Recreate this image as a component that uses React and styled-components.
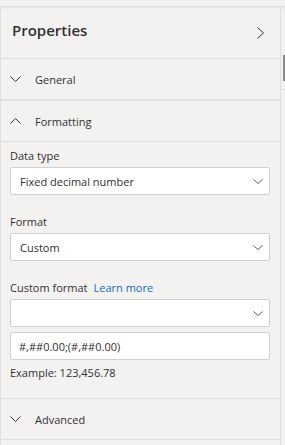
import React from "react";
import styled, { createGlobalStyle } from "styled-components";

const Global = createGlobalStyle`
  html, body { margin: 0; padding: 0; background: #f3f2f1; }
  body { font-family: "Open Sans", "Noto Sans", sans-serif; color: #323130; }
  * { box-sizing: border-box; }
`;

const Page = styled.div`
  width: 285px;
  height: 445px;
  overflow: hidden;
  display: flex;
  flex-direction: column;
  background: #f3f2f1;
`;

const TopBand = styled.div`
  height: 7px;
  flex: none;
  border-bottom: 1px solid #e1dfdd;
  box-shadow: 0 1px 2px rgba(0,0,0,0.05);
`;

const Body = styled.div`
  display: flex;
  flex: 1;
`;

const Panel = styled.div`
  width: 281px;
  border-left: 1px solid #e1dfdd;
  border-right: 1px solid #e1dfdd;
  display: flex;
  flex-direction: column;
`;

const Rail = styled.div`
  flex: 1;
  position: relative;
`;

const RailLine = styled.div`
  margin-top: 82px;
  height: 1px;
  background: #e1dfdd;
`;

const Thumb = styled.div`
  position: absolute;
  right: 0;
  top: 48px;
  width: 2px;
  height: 26px;
  background: #8a8886;
`;

const Header = styled.div`
  height: 52px;
  flex: none;
  display: flex;
  align-items: center;
  justify-content: space-between;
  padding: 0 16px 0 11px;
  border-bottom: 1px solid #e1dfdd;
`;

const Title = styled.div`
  font-size: 15px;
  font-weight: 600;
  color: #323130;
  margin-top: -5px;
`;

const SectionHead = styled.div`
  height: ${(p) => p.h}px;
  flex: none;
  display: flex;
  align-items: center;
  gap: 14px;
  padding-left: 9px;
  font-size: 11px;
  border-bottom: ${(p) => p.bw || 1}px solid #e1dfdd;
`;

const Content = styled.div`
  padding: 6px 10px 0 9px;
  height: 257px;
  flex: none;
  display: flex;
  flex-direction: column;
  border-bottom: 1px solid #e1dfdd;
`;

const Label = styled.div`
  font-size: 11px;
  line-height: 16px;
  margin-bottom: 3px;
  display: flex;
  gap: 6px;
`;

const Link = styled.span`
  color: #106ebe;
`;

const Field = styled.div`
  height: 28px;
  flex: none;
  background: #fff;
  border: 1px solid #d2d0ce;
  border-radius: 2px;
  display: flex;
  align-items: center;
  justify-content: space-between;
  padding: 0 6px 0 ${(p) => p.pl || 9}px;
  font-size: 11px;
  margin-bottom: ${(p) => p.mb || 0}px;
`;

const Example = styled.div`
  font-size: 11px;
  line-height: 16px;
  margin-top: 5px;
`;

const Chevron = ({ dir = "down", w = 11, h = 6, color = "#323130" }) => {
  const pts = {
    down: `0.5,0.5 ${w / 2},${h - 0.5} ${w - 0.5},0.5`,
    up: `0.5,${h - 0.5} ${w / 2},0.5 ${w - 0.5},${h - 0.5}`,
    right: `0.5,0.5 ${w - 0.5},${h / 2} 0.5,${h - 0.5}`,
  }[dir];
  return (
    <svg width={w} height={h} viewBox={`0 0 ${w} ${h}`} fill="none">
      <polyline points={pts} stroke={color} strokeWidth="1" strokeLinejoin="miter" />
    </svg>
  );
};

const Select = ({ value, mb }) => (
  <Field mb={mb}>
    <span>{value}</span>
    <Chevron dir="down" w={10} h={5} color="#605e5c" />
  </Field>
);

export default function App() {
  return (
    <Page>
      <Global />
      <TopBand />
      <Body>
        <Panel>
          <Header>
            <Title>Properties</Title>
            <Chevron dir="right" w={7} h={12} color="#323130" />
          </Header>
          <SectionHead h={42} bw={2}>
            <Chevron dir="down" />
            <span>General</span>
          </SectionHead>
          <SectionHead h={41}>
            <Chevron dir="up" />
            <span>Formatting</span>
          </SectionHead>
          <Content>
            <Label>Data type</Label>
            <Select value="Fixed decimal number" mb={19} />
            <Label>Format</Label>
            <Select value="Custom" mb={19} />
            <Label>
              Custom format <Link>Learn more</Link>
            </Label>
            <Select value="" mb={5} />
            <Field pl={8}>#,##0.00;(#,##0.00)</Field>
            <Example>Example: 123,456.78</Example>
          </Content>
          <SectionHead h={41}>
            <Chevron dir="down" />
            <span>Advanced</span>
          </SectionHead>
        </Panel>
        <Rail>
          <RailLine />
          <Thumb />
        </Rail>
      </Body>
    </Page>
  );
}
